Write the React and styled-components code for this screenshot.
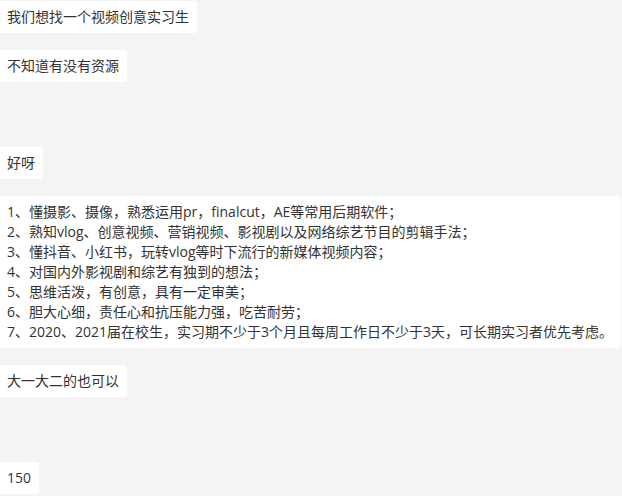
import React from "react";
import styled, { createGlobalStyle } from "styled-components";

const Global = createGlobalStyle`
  html, body {
    margin: 0;
    padding: 0;
    background: #f4f4f4;
  }
  body {
    font-family: "Open Sans", "Noto Sans CJK SC", sans-serif;
    overflow: hidden;
  }
`;

const Chat = styled.div`
  display: flex;
  flex-direction: column;
  align-items: flex-start;
  gap: 17px;
  padding-top: 1px;
  width: 622px;
  height: 496px;
  overflow: hidden;
  box-sizing: border-box;
`;

const Bubble = styled.div`
  box-sizing: border-box;
  margin-left: -5px;
  margin-top: ${(p) => (p.$far ? "48px" : "0")};
  align-self: ${(p) => (p.$wide ? "stretch" : "flex-start")};
  margin-right: ${(p) => (p.$wide ? "1px" : "0")};
  padding: 6px 8px 6px 12px;
  background: #ffffff;
  border-radius: 3px;
  color: #333333;
  font-size: 14px;
  line-height: 20px;
  white-space: pre-line;
`;

const Line = styled.div`
  white-space: nowrap;
`;

const list = [
  "1、懂摄影、摄像，熟悉运用pr，finalcut，AE等常用后期软件；",
  "2、熟知vlog、创意视频、营销视频、影视剧以及网络综艺节目的剪辑手法；",
  "3、懂抖音、小红书，玩转vlog等时下流行的新媒体视频内容；",
  "4、对国内外影视剧和综艺有独到的想法；",
  "5、思维活泼，有创意，具有一定审美；",
  "6、胆大心细，责任心和抗压能力强，吃苦耐劳；",
  "7、2020、2021届在校生，实习期不少于3个月且每周工作日不少于3天，可长期实习者优先考虑。",
];

export default function App() {
  return (
    <>
      <Global />
      <Chat>
        <Bubble>我们想找一个视频创意实习生</Bubble>
        <Bubble>不知道有没有资源</Bubble>
        <Bubble $far>好呀</Bubble>
        <Bubble $wide>
          {list.map((t) => (
            <Line key={t}>{t}</Line>
          ))}
        </Bubble>
        <Bubble>大一大二的也可以</Bubble>
        <Bubble $far>150</Bubble>
      </Chat>
    </>
  );
}
